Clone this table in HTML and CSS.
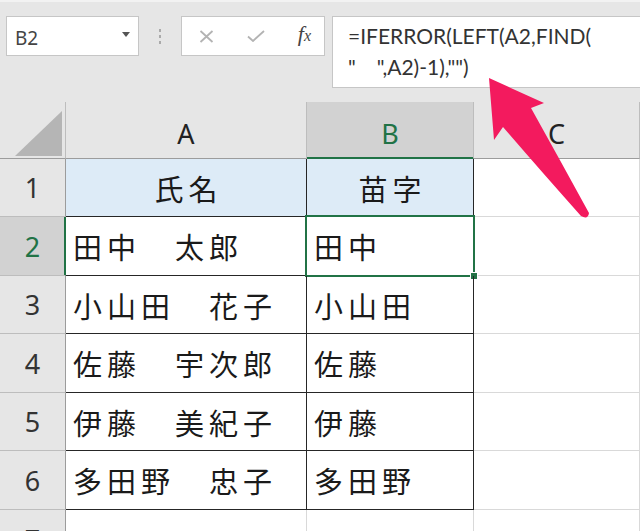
FILE: index.html
```html
<!DOCTYPE html>
<html lang="ja">
<head>
  <meta charset="UTF-8" />
  <title>IFERROR LEFT FIND</title>
  <link rel="stylesheet" href="styles.css">
</head>
<body>

  <div class="toolbar">
    <div class="namebox">
      <span>B2</span>
      <svg class="drop" width="8" height="5" viewBox="0 0 8 5"><path d="M0 0H8L4 5Z" fill="#555"/></svg>
    </div>
    <div class="grip"><i></i><i></i><i></i></div>
    <div class="fxbox">
      <svg width="15" height="13" viewBox="0 0 15 13"><path d="M1.5 1L13.5 12M13.5 1L1.5 12" stroke="#b3b3b3" stroke-width="1.8" fill="none"/></svg>
      <svg width="18" height="12" viewBox="0 0 18 12"><path d="M1 6.5L6 11L17 1" stroke="#b3b3b3" stroke-width="1.8" fill="none"/></svg>
      <span class="fx"><i>f</i><i class="x">x</i></span>
    </div>
    <div class="formula">=IFERROR(LEFT(A2,FIND(<br>"　",A2)-1),"")</div>
  </div>

  <div class="sheet">
    <div class="hd corner">
      <svg width="47" height="45" viewBox="0 0 47 45"><path d="M0 45H47V0Z" fill="#b5b5b5"/></svg>
    </div>
    <div class="hd">A</div>
    <div class="hd sel">B</div>
    <div class="hd">C</div>

    <div class="rh">1</div>
    <div class="cell title">氏名</div>
    <div class="cell title">苗字</div>
    <div class="gc"></div>

    <div class="rh sel">2</div>
    <div class="cell">田中　太郎</div>
    <div class="cell active">田中<span class="frame"></span><span class="handle"></span></div>
    <div class="gc"></div>

    <div class="rh">3</div>
    <div class="cell">小山田　花子</div>
    <div class="cell">小山田</div>
    <div class="gc"></div>

    <div class="rh">4</div>
    <div class="cell">佐藤　宇次郎</div>
    <div class="cell">佐藤</div>
    <div class="gc"></div>

    <div class="rh">5</div>
    <div class="cell">伊藤　美紀子</div>
    <div class="cell">伊藤</div>
    <div class="gc"></div>

    <div class="rh">6</div>
    <div class="cell">多田野　忠子</div>
    <div class="cell">多田野</div>
    <div class="gc"></div>

    <div class="rh">7</div>
    <div class="gc line"></div>
    <div class="gc line"></div>
    <div class="gc"></div>
  </div>

  <svg class="pointer" width="640" height="531" viewBox="0 0 640 531">
    <path d="M489 78L544 103L531 108Q560 160 589 213Q588 220 581 216Q540 170 503 127L494 140Z" fill="#f31a5e"/>
  </svg>

</body>
</html>
```

FILE: styles.css
```css
body {
  margin: 0;
  width: 640px;
  height: 531px;
  overflow: hidden;
  position: relative;
  background: #e6e6e6;
  font-family: "Noto Sans", sans-serif;
  color: #222;
}

.toolbar {
  height: 102px;
  box-sizing: border-box;
  display: flex;
  align-items: flex-start;
  border-top: 2px solid #f2f2f2;
  padding-top: 14px;
}

.namebox {
  margin-left: 6px;
  width: 133px;
  height: 40px;
  box-sizing: border-box;
  background: white;
  border: 1px solid #c6c6c6;
  display: flex;
  align-items: center;
  justify-content: space-between;
  padding: 4px 8px 0 8px;
  font-size: 19px;
  color: #444;
}

.namebox .drop {
  margin-top: -8px;
}

.grip {
  width: 42px;
  height: 40px;
  display: flex;
  flex-direction: column;
  align-items: center;
  justify-content: center;
  gap: 3px;
}

.grip i {
  width: 2px;
  height: 3px;
  background: #aaa;
}

.fxbox {
  width: 144px;
  height: 40px;
  box-sizing: border-box;
  background: white;
  border: 1px solid #c6c6c6;
  display: flex;
  align-items: center;
  padding: 0 13px 0 17px;
  justify-content: space-between;
}

.fx {
  font-family: "Liberation Serif", serif;
  font-size: 22px;
  color: #444;
  margin-top: -4px;
}

.fx .x {
  font-size: 16px;
}

.formula {
  margin-left: 7px;
  flex: 1;
  height: 72px;
  box-sizing: border-box;
  background: white;
  border: 1px solid #c6c6c6;
  border-right: none;
  padding: 3px 0 0 15px;
  font-family: "Lato", sans-serif;
  font-size: 21px;
  line-height: 31px;
  color: #333;
  white-space: nowrap;
}

.sheet {
  display: grid;
  grid-template-columns: 66px 241px 167px 1fr;
  grid-template-rows: 57px 58px 59px 58px 59px 58px 59px 60px;
  background: white;
}

.sheet > div {
  box-sizing: border-box;
  border-right: 1px solid #d9d9d9;
  border-bottom: 1px solid #d9d9d9;
}

.hd {
  background: #e6e6e6;
  border-right-color: #bdbdbd !important;
  border-bottom-color: #9c9c9c !important;
  display: flex;
  align-items: center;
  justify-content: center;
  font-size: 27px;
  color: #222;
  padding-top: 6px;
}

.hd.corner {
  align-items: flex-end;
  justify-content: flex-end;
  padding: 0 3px 2px 0;
}

.hd.sel {
  background: #d2d2d2;
  color: #217346;
  border-bottom-color: #217346 !important;
  box-shadow: inset 0 -1px #217346;
}

.rh {
  background: #e6e6e6;
  border-right-color: #9c9c9c !important;
  border-bottom-color: #bdbdbd !important;
  display: flex;
  align-items: center;
  justify-content: center;
  font-size: 27px;
  color: #333;
}

.rh.sel {
  background: #d2d2d2;
  color: #217346;
  border-right-color: #217346 !important;
  box-shadow: inset -1px 0 #217346;
}

.cell {
  position: relative;
  border-right-color: #262626 !important;
  border-bottom-color: #262626 !important;
  display: flex;
  align-items: center;
  padding-left: 7px;
  font-family: "Noto Sans CJK JP", sans-serif;
  font-size: 29px;
  letter-spacing: 5px;
  color: #1a1a1a;
  white-space: nowrap;
}

.cell.title {
  background: #ddebf7;
  justify-content: center;
  padding-left: 5px;
}

.frame {
  position: absolute;
  left: -2px;
  top: -2px;
  right: -2px;
  bottom: -2px;
  border: 2px solid #217346;
}

.handle {
  position: absolute;
  right: -5px;
  bottom: -5px;
  width: 6px;
  height: 6px;
  background: #217346;
  border: 1px solid white;
}

.gc.line {
  border-right-color: #d9d9d9;
}

.pointer {
  position: absolute;
  left: 0;
  top: 0;
  pointer-events: none;
}
```
